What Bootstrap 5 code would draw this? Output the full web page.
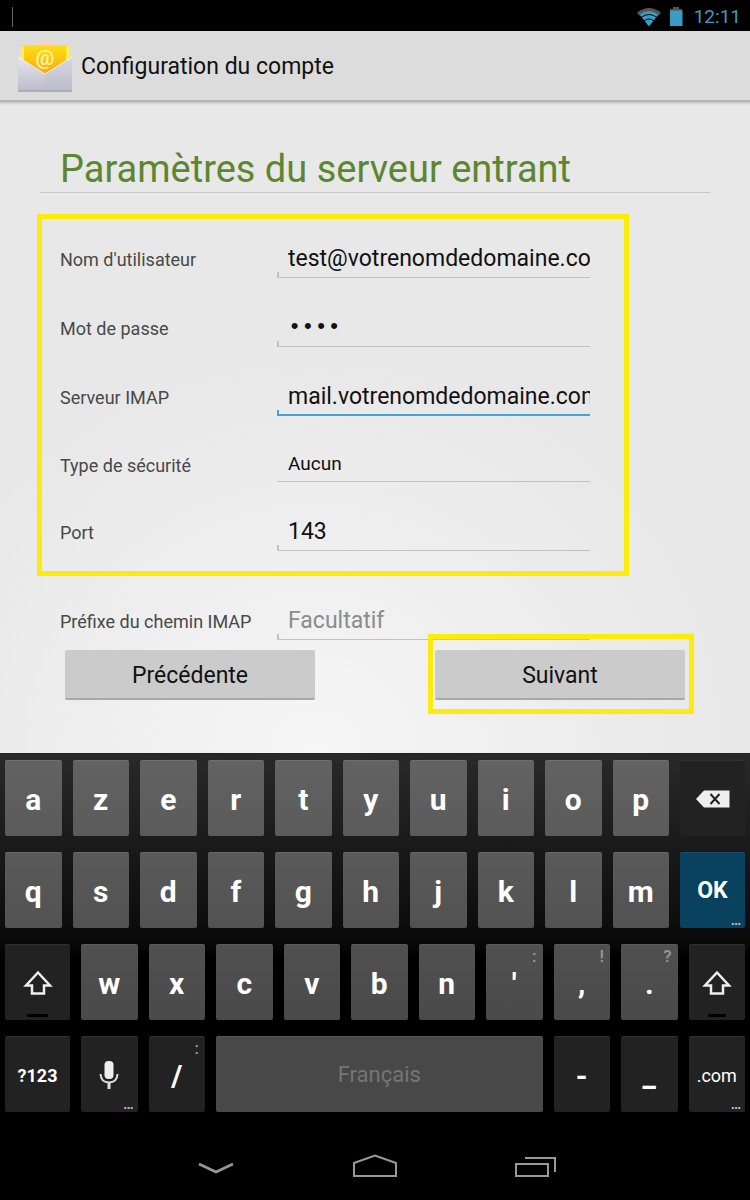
<!DOCTYPE html>
<html lang="fr">
<head>
<meta charset="utf-8">
<meta name="viewport" content="width=device-width, initial-scale=1">
<title>Configuration du compte</title>
<link href="https://cdn.jsdelivr.net/npm/bootstrap@5.3.0/dist/css/bootstrap.min.css" rel="stylesheet">
<style>
  body { font-family: Roboto, "Liberation Sans", sans-serif; background: #000; color: #111; }
  .status-bar { height: 31px; color: #3a9cc4; font-size: 19px; line-height: 31px; padding: 2px 9px 0 12px; }
  .status-mark { width: 1px; height: 20px; background: #666; }
  .app-bar { height: 71px; background: #dcdcdc; border-bottom: 2px solid #b6b6b6; padding: 3px 17px 0; }
  .app-bar h1 { font-size: 23px; line-height: 28px; color: #111; }
  .setup { background: radial-gradient(ellipse 420px 400px at 42% 100%, #f6f6f6, #e8e8e8); box-shadow: inset 0 5px 3px -4px #bbb; padding-top: 45px; }
  .section-title { font-size: 38px; line-height: 45px; color: #5c8730; margin: 0 40px 21px; padding-left: 20px; border-bottom: 1px solid #c8c8c8; }
  .marked { border: 5px solid #fdec0a; margin: 0 121px 0 37px; padding: 21px 34px 20px 18px; gap: 31px; }
  .prefix-row { margin: 26px 160px 10px 60px; }
  .field-row label { width: 217px; padding-top: 2px; font-size: 18px; line-height: 24px; color: #484848; }
  .field {
    flex: 1 1 0; min-width: 0; height: 38px; border: 0; border-radius: 0; outline: 0; padding: 0 0 1px 11px;
    font-size: 23px; color: #111; --line: #c2c2c2; --thick: 1px;
    background: linear-gradient(var(--line), var(--line)) 0 100% / 100% var(--thick) no-repeat,
                linear-gradient(var(--line), var(--line)) 0 100% / 2px 6px no-repeat;
  }
  .field::placeholder { color: #8c8c8c; opacity: 1; }
  .field.active { --line: #45a6cf; --thick: 2px; }
  .field[type="password"] { font-family: "Liberation Mono", monospace; font-size: 22px; }
  select.field { appearance: none; height: 35px; font-size: 19px; background-size: 100% 1px, 0 0; }
  .actions { padding: 0 65px 53px; gap: 120px; }
  .step-slot { flex: 1 1 0; min-width: 0; }
  .nav-step { height: 50px; border: 0; border-bottom: 2px solid #a9a9a9; border-radius: 2px; background: #cbcbcb; font-size: 23px; color: #111; padding: 4px 0 0; }
  .highlight { position: absolute; inset: -16px -9px -14px -7px; border: 5px solid #fdec0a; pointer-events: none; }
  .keyboard { background: linear-gradient(#292929, #0b0b0b 50%, #000 56%); padding: 6px 5px 9px; gap: 16px; border-top: 1px solid #222; }
  .key-row { display: grid; gap: 11px; grid-template-columns: repeat(10, minmax(0, 113fr)) minmax(0, 130fr); }
  .key-row.shifted { grid-template-columns: minmax(0, 130fr) repeat(10, minmax(0, 113fr)); }
  .key { position: relative; height: 76px; padding: 2px 0 0; border: 0; border-top: 1px solid #707070; border-radius: 2px; background: linear-gradient(#626262, #5b5b5b); color: #fff; font-size: 30px; font-weight: 700; line-height: 36px; }
  .mid .key { background: linear-gradient(#5a5a5a, #525252); border-color: #686868; }
  .low .key { background: linear-gradient(#505050, #4a4a4a); border-color: #5c5c5c; }
  .key-row .key.dark { background: #222; border-color: #303030; }
  .key-row .key.space { grid-column: span 5; padding: 0; background: #484848; border-color: #565656; color: #757575; font-size: 22px; font-weight: 400; }
  .key-row .key.ok { background: #08425f; border-color: #17506c; font-size: 23px; padding: 0; }
  .key-row .key.word { font-size: 18px; }
  .key-row .key.thin { font-weight: 400; }
  .key.glyph { padding: 0; }
  .key svg { display: block; margin: 0 auto; }
  .hint { position: absolute; top: 2px; right: 6px; font-size: 17px; line-height: 18px; font-weight: 500; color: #999; }
  .more { position: absolute; bottom: 1px; right: 4px; font-size: 14px; line-height: 14px; font-weight: 700; color: #bbb; }
  .lock { position: absolute; bottom: 3px; left: 34%; width: 32%; height: 3px; background: #000; border-radius: 1px; }
  .system-nav { height: 80px; padding-top: 10px; }
  .system-nav button { width: 160px; border: 0; background: none; padding: 0; }
</style>
</head>
<body>
<div class="d-flex flex-column min-vh-100">
  <div class="status-bar d-flex align-items-center">
    <span class="status-mark"></span>
    <svg class="ms-auto" width="26" height="20" viewBox="0 0 26 20" aria-label="Wi-Fi">
      <path d="M1 5.500Q13-3.500 25 5.500L23 8.500Q13 1 3 8.500Z" fill="#555"/>
      <path d="M3.500 7.500Q13 .5 22.500 7.500L13 19.500Z" fill="#3a9cc4"/>
      <path d="M5 10.500Q13 4.500 21 10.500M8 14Q13 10 18 14" fill="none" stroke="#000" stroke-width="1"/>
    </svg>
    <svg class="ms-1" width="20" height="20" viewBox="0 0 20 20" aria-label="Batterie">
      <path d="M7 0h6v2h3v3H4V2h3z" fill="#555"/><path d="M4 3.500h12.500V19H4z" fill="#3a9cc4"/>
    </svg>
    <span class="ps-2">12:11</span>
  </div>

  <header class="app-bar d-flex align-items-center gap-2">
    <svg width="56" height="54" viewBox="0 0 56 54" aria-hidden="true">
      <defs>
        <linearGradient id="letter" x2="0" y2="1"><stop stop-color="#fde01a"/><stop offset="1" stop-color="#fba406"/></linearGradient>
        <linearGradient id="envelope" x2="0" y2="1"><stop stop-color="#e6e6ee"/><stop offset="1" stop-color="#bcbccb"/></linearGradient>
      </defs>
      <path d="M16 5Q28-4 40 5z" fill="#f6d5c8"/>
      <path d="M4 5h48v22L28 36 4 27z" fill="url(#letter)"/>
      <path d="M4 5l3 2v18l-3-3zM52 5l-3 2v18l3-3z" fill="#fff04a"/>
      <path d="M1 17L28 34 55 17V51H1z" fill="url(#envelope)"/>
      <path d="M28 34L55 17V51H28z" fill="#b8b8cc" opacity=".3"/>
      <path d="M1 17L28 34 55 17" fill="none" stroke="#f3f3f8"/>
      <path d="M1 51h54" stroke="#a2a2b0" stroke-width="1.500"/>
      <text x="28" y="25" text-anchor="middle" font-size="21" font-weight="700" fill="#fff3a0">@</text>
    </svg>
    <h1 class="m-0 fw-normal">Configuration du compte</h1>
  </header>

  <main class="setup flex-grow-1">
    <h2 class="section-title fw-normal">Paramètres du serveur entrant</h2>
    <form>
      <div class="marked d-flex flex-column">
        <div class="field-row d-flex align-items-center"><label for="user">Nom d'utilisateur</label><input class="field" id="user" type="text" value="test@votrenomdedomaine.co"></div>
        <div class="field-row d-flex align-items-center"><label for="pass">Mot de passe</label><input class="field" id="pass" type="password" value="test"></div>
        <div class="field-row d-flex align-items-center"><label for="server">Serveur IMAP</label><input class="field active" id="server" type="text" value="mail.votrenomdedomaine.com"></div>
        <div class="field-row d-flex align-items-center"><label for="security">Type de sécurité</label><select class="field" id="security"><option>Aucun</option></select></div>
        <div class="field-row d-flex align-items-center"><label for="port">Port</label><input class="field" id="port" type="text" value="143"></div>
      </div>
      <div class="field-row prefix-row d-flex align-items-center"><label for="prefix">Préfixe du chemin IMAP</label><input class="field" id="prefix" type="text" placeholder="Facultatif"></div>
      <div class="actions d-flex">
        <div class="step-slot">
          <button type="button" class="nav-step w-100 d-block">Précédente</button>
        </div>
        <div class="step-slot position-relative">
          <button type="button" class="nav-step w-100 d-block">Suivant</button>
          <span class="highlight"></span>
        </div>
      </div>
    </form>
  </main>

  <section class="keyboard d-flex flex-column" aria-label="Clavier">
    <div class="key-row">
      <button class="key">a</button><button class="key">z</button><button class="key">e</button><button class="key">r</button><button class="key">t</button><button class="key">y</button><button class="key">u</button><button class="key">i</button><button class="key">o</button><button class="key">p</button>
      <button class="key dark glyph" aria-label="Effacer">
        <svg width="34" height="18" viewBox="0 0 34 18"><path d="M0 9L8 0.500H33.500V17.500H8Z" fill="#eee"/><path d="M14.500 4l9 10M23.500 4l-9 10" stroke="#222" stroke-width="2"/></svg>
      </button>
    </div>
    <div class="key-row mid">
      <button class="key">q</button><button class="key">s</button><button class="key">d</button><button class="key">f</button><button class="key">g</button><button class="key">h</button><button class="key">j</button><button class="key">k</button><button class="key">l</button><button class="key">m</button>
      <button class="key ok">OK<span class="more">…</span></button>
    </div>
    <div class="key-row shifted low">
      <button class="key dark glyph" aria-label="Majuscule"><svg width="30" height="26" viewBox="0 0 30 26"><path d="M15 2.500L27 15.500H21V23.500H9V15.500H3Z" fill="none" stroke="#eee" stroke-width="2.500"/></svg><span class="lock"></span></button>
      <button class="key">w</button><button class="key">x</button><button class="key">c</button><button class="key">v</button><button class="key">b</button><button class="key">n</button>
      <button class="key">'<span class="hint">:</span></button><button class="key">,<span class="hint">!</span></button><button class="key">.<span class="hint">?</span></button>
      <button class="key dark glyph" aria-label="Majuscule"><svg width="30" height="26" viewBox="0 0 30 26"><path d="M15 2.500L27 15.500H21V23.500H9V15.500H3Z" fill="none" stroke="#eee" stroke-width="2.500"/></svg><span class="lock"></span></button>
    </div>
    <div class="key-row shifted">
      <button class="key dark word">?123</button>
      <button class="key dark glyph" aria-label="Dictée"><svg width="20" height="28" viewBox="0 0 20 28"><rect x="5.500" y="0" width="9" height="18" rx="4" fill="#eee"/><path d="M1.500 13Q2 21.500 10 21.500T18.500 13" fill="none" stroke="#ddd" stroke-width="2"/><path d="M10 21v7" stroke="#ddd" stroke-width="3"/></svg><span class="more">…</span></button>
      <button class="key dark">/<span class="hint">:</span></button>
      <button class="key space">Français</button>
      <button class="key dark">-</button><button class="key dark">_</button>
      <button class="key dark word thin">.com<span class="more">…</span></button>
    </div>
  </section>

  <nav class="system-nav d-flex justify-content-center" aria-label="Système">
    <button aria-label="Retour"><svg width="44" height="28" viewBox="0 0 44 28"><path d="M6 12l17 8 17-8" fill="none" stroke="#999" stroke-width="2.500"/></svg></button>
    <button aria-label="Accueil"><svg width="44" height="28" viewBox="0 0 44 28"><path d="M1 11L22 3.500l21 7.500v13H1z" fill="none" stroke="#999" stroke-width="2"/></svg></button>
    <button aria-label="Applications récentes"><svg width="44" height="28" viewBox="0 0 44 28"><path d="M3 12h32v12H3zM12 6h30v14" fill="none" stroke="#999" stroke-width="2"/></svg></button>
  </nav>
</div>
<script src="https://cdn.jsdelivr.net/npm/bootstrap@5.3.0/dist/js/bootstrap.bundle.min.js"></script>
</body>
</html>
